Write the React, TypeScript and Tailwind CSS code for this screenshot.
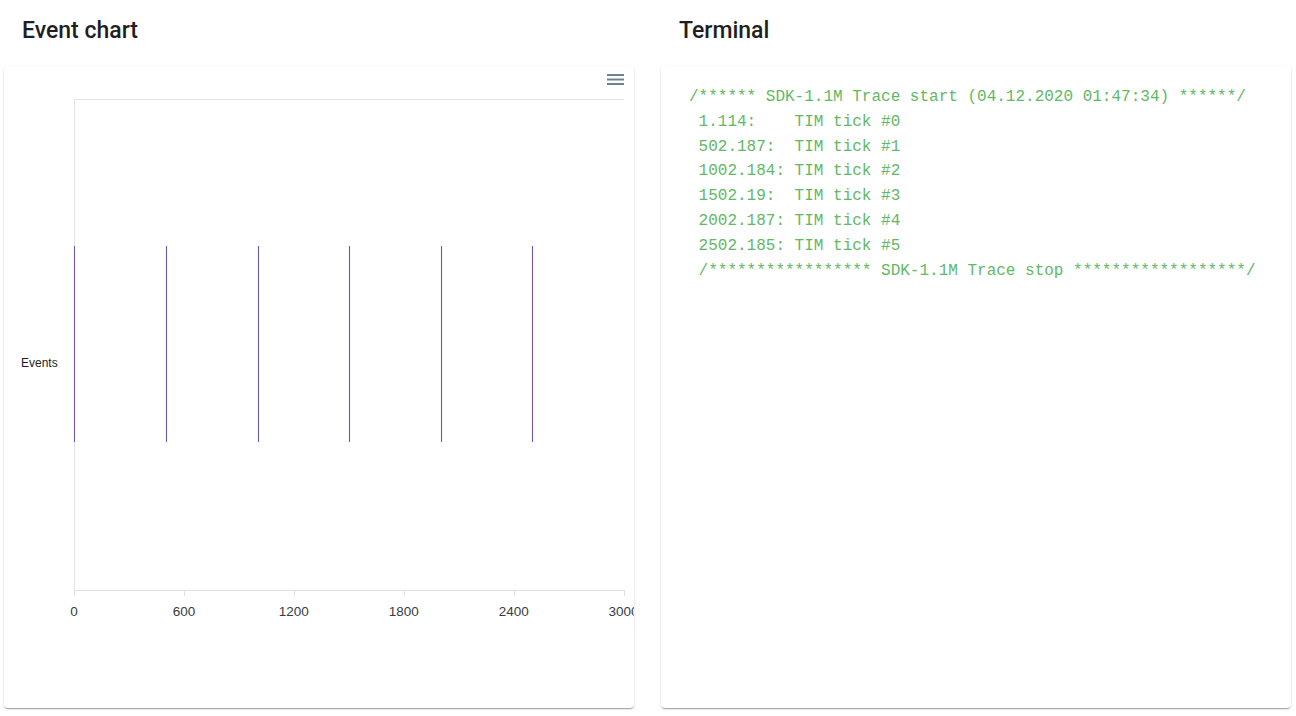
import React from "react";

const events = [1.114, 502.187, 1002.184, 1502.19, 2002.187, 2502.185];
const ticks = [0, 600, 1200, 1800, 2400, 3000];

const traceLines = [
  "/****** SDK-1.1M Trace start (04.12.2020 01:47:34) ******/",
  " 1.114:    TIM tick #0",
  " 502.187:  TIM tick #1",
  " 1002.184: TIM tick #2",
  " 1502.19:  TIM tick #3",
  " 2002.187: TIM tick #4",
  " 2502.185: TIM tick #5",
  " /***************** SDK-1.1M Trace stop ******************/",
];

// plot box inside the card (card-relative px)
const PLOT_LEFT = 70;
const PLOT_RIGHT = 619;
const PLOT_TOP = 33;
const PLOT_BOTTOM = 524;
const X_MAX = 3000;
const PLOT_WIDTH = 549.6;

const toX = (v: number) => PLOT_LEFT + (v / X_MAX) * PLOT_WIDTH;

function EventChart() {
  return (
    <svg width="630" height="642" className="block" style={{ fontFamily: '"Liberation Sans", Arial, sans-serif' }}>
      {/* menu icon */}
      <g fill="#6e8192">
        <rect x="603" y="8" width="17" height="2" />
        <rect x="603" y="12.5" width="17" height="2" />
        <rect x="603" y="17" width="17" height="2" />
      </g>

      {/* plot borders */}
      <line x1={PLOT_LEFT} y1={PLOT_TOP + 0.5} x2={PLOT_RIGHT + 1} y2={PLOT_TOP + 0.5} stroke="#e3e3e3" />
      <line x1={PLOT_LEFT + 0.5} y1={PLOT_TOP} x2={PLOT_LEFT + 0.5} y2={PLOT_BOTTOM} stroke="#e3e3e3" />
      <line x1={PLOT_LEFT} y1={PLOT_BOTTOM + 0.5} x2={PLOT_RIGHT + 1} y2={PLOT_BOTTOM + 0.5} stroke="#e0e0e0" />
      {ticks.map((t) => (
        <line
          key={`tick-${t}`}
          x1={Math.round(toX(t)) + 0.5}
          y1={PLOT_BOTTOM}
          x2={Math.round(toX(t)) + 0.5}
          y2={PLOT_BOTTOM + 6}
          stroke="#e0e0e0"
        />
      ))}

      {/* event markers */}
      {events.map((e) => (
        <line
          key={e}
          x1={Math.round(toX(e)) + 0.5}
          y1={180}
          x2={Math.round(toX(e)) + 0.5}
          y2={376}
          stroke="#6d55ad"
          strokeWidth="1.1"
        />
      ))}

      <text x="17" y="301" fontSize="12" fill="#222">
        Events
      </text>

      {ticks.map((t) => (
        <text
          key={`label-${t}`}
          x={toX(t)}
          y={550}
          fontSize="13.5"
          fill="#373d3f"
          textAnchor="middle"
        >
          {t}
        </text>
      ))}
    </svg>
  );
}

function Card({ children, className = "" }: { children: React.ReactNode; className?: string }) {
  return (
    <div
      className={`h-[642px] w-[630px] overflow-hidden rounded-[4px] bg-white shadow-[0_2px_1px_-1px_rgba(0,0,0,0.2),0_1px_1px_0_rgba(0,0,0,0.14),0_1px_3px_0_rgba(0,0,0,0.12)] ${className}`}
    >
      {children}
    </div>
  );
}

export default function App() {
  return (
    <div className="min-h-[716px] w-[1296px] bg-white font-['Roboto',sans-serif]">
      <div className="flex gap-[27px] px-[4px]">
        <section className="flex w-[630px] flex-col">
          <h2 className="flex h-[66px] items-center pb-[4px] pl-[18px] text-[23px] font-medium text-[#1f1f1f]">
            Event chart
          </h2>
          <Card>
            <EventChart />
          </Card>
        </section>

        <section className="flex w-[630px] flex-col">
          <h2 className="flex h-[66px] items-center pb-[4px] pl-[18px] text-[23px] font-medium text-[#1f1f1f]">
            Terminal
          </h2>
          <Card className="px-[28px] pt-[19px]">
            <pre className="whitespace-pre font-['Liberation_Mono','Courier_New',monospace] text-[16px] leading-[24.8px] text-[#62b865]">
              {traceLines.join("\n")}
            </pre>
          </Card>
        </section>
      </div>
    </div>
  );
}
